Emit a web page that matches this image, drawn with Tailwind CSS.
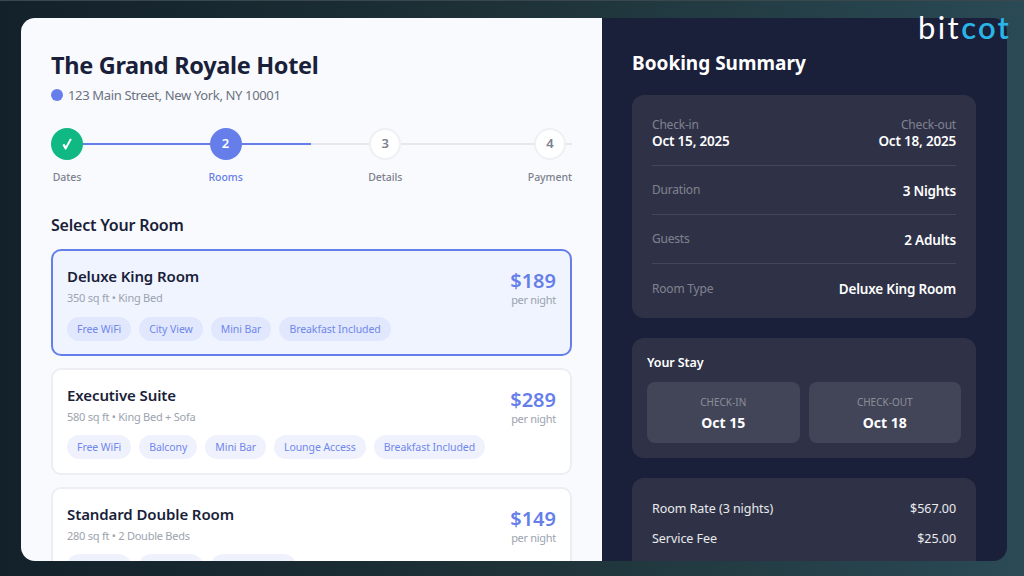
<!DOCTYPE html>
<html lang="en">

<head>
  <meta charset="UTF-8" />
  <meta name="viewport" content="width=device-width, initial-scale=1" />
  <title>Hotel Booking</title>
  <script src="https://cdn.jsdelivr.net/npm/@tailwindcss/browser@4"></script>
</head>

<body class="relative h-[576px] w-[1024px] overflow-hidden border-t border-[#3a474d] bg-gradient-to-r from-[#13212a] via-[#1e3238] to-[#2a4a55] pt-[17px] pl-[21px] font-['Noto_Sans',sans-serif]">

  <!-- Logo sits over the card corner -->
  <div class="absolute top-[7px] left-[918px] font-['Lato',sans-serif] text-[31px] leading-[38px] font-normal tracking-[2.4px] text-white">bit<span class="font-semibold tracking-[2.2px] text-[#29b6e6]">cot</span></div>

  <div class="flex h-[543px] w-[986px] overflow-hidden rounded-[14px]">

    <!-- Left column -->
    <div class="w-[581px] shrink-0 bg-[#f9fafe] px-[30px] pt-[29px]">
      <h1 class="text-[23.5px] leading-[36px] font-bold tracking-[-0.32px] text-[#1a1f3a]">The Grand Royale Hotel</h1>
      <div class="mt-[2px] flex items-center gap-[5px] text-[13px] leading-[20px] tracking-[-0.35px] text-[#6b7280]">
        <span class="h-3 w-3 rounded-full bg-[#667eea]"></span>
        123 Main Street, New York, NY 10001
      </div>

      <!-- Stepper -->
      <div class="relative mt-[23px] flex justify-between">
        <div class="absolute top-[15px] left-0 h-[2px] w-full bg-[#e5e7eb]"></div>
        <div class="absolute top-[15px] left-0 h-[2px] w-[260px] bg-[#667eea]"></div>
        <div class="relative flex flex-col items-center">
          <div class="flex h-8 w-8 items-center justify-center rounded-full bg-[#10b981]">
            <svg width="10" height="12" viewBox="0 0 10 12" fill="#fff"><path d="M0.5 7 L2.2 5.8 L3.8 8 L8 0.5 L9.8 1.2 L4.2 11.5 L3 11.5 Z" /></svg>
          </div>
          <div class="mt-[9px] text-[10.5px] leading-[16px] font-medium tracking-[-0.05px] text-[#7b818d]">Dates</div>
        </div>
        <div class="relative flex flex-col items-center">
          <div class="flex h-8 w-8 items-center justify-center rounded-full bg-[#667eea] text-[13px] font-semibold text-white">2</div>
          <div class="mt-[9px] text-[10.5px] leading-[16px] font-medium tracking-[-0.05px] text-[#667eea]">Rooms</div>
        </div>
        <div class="relative flex flex-col items-center">
          <div class="flex h-8 w-8 items-center justify-center rounded-full border-2 border-[#eef0f3] bg-white text-[13px] font-semibold text-[#7b818d]">3</div>
          <div class="mt-[9px] text-[10.5px] leading-[16px] font-medium tracking-[-0.05px] text-[#7b818d]">Details</div>
        </div>
        <div class="relative flex flex-col items-center">
          <div class="flex h-8 w-8 items-center justify-center rounded-full border-2 border-[#eef0f3] bg-white text-[13px] font-semibold text-[#7b818d]">4</div>
          <div class="mt-[9px] text-[10.5px] leading-[16px] font-medium tracking-[-0.05px] text-[#7b818d]">Payment</div>
        </div>
      </div>

      <h2 class="mt-[28px] text-[16px] leading-[24px] font-semibold tracking-[-0.22px] text-[#1a1f3a]">Select Your Room</h2>

      <!-- Room cards -->
      <div class="mt-[12px] flex flex-col gap-[12px]">
        <div class="h-[107px] rounded-[10px] border-2 border-[#667eea] bg-[#f0f4ff] px-[14px] pt-[13px]">
          <div class="flex justify-between">
            <div>
              <div class="text-[15px] leading-[24px] font-semibold tracking-[-0.1px] text-[#1a1f3a]">Deluxe King Room</div>
              <div class="mt-[2px] text-[11px] leading-[16px] tracking-[-0.25px] text-[#9ca3af]">350 sq ft • King Bed</div>
            </div>
            <div class="pt-[5px] text-right">
              <div class="text-[20px] leading-[24px] font-semibold text-[#667eea]">$189</div>
              <div class="text-[11px] leading-[14px] tracking-[-0.3px] text-[#9ca3af]">per night</div>
            </div>
          </div>
          <div class="mt-[10px] flex gap-2">
            <span class="rounded-full bg-[#667eea]/10 px-[10px] py-[4px] text-[10.5px] leading-[16px] tracking-[-0.07px] text-[#7087ec]">Free WiFi</span>
            <span class="rounded-full bg-[#667eea]/10 px-[10px] py-[4px] text-[10.5px] leading-[16px] tracking-[-0.07px] text-[#7087ec]">City View</span>
            <span class="rounded-full bg-[#667eea]/10 px-[10px] py-[4px] text-[10.5px] leading-[16px] tracking-[-0.07px] text-[#7087ec]">Mini Bar</span>
            <span class="rounded-full bg-[#667eea]/10 px-[10px] py-[4px] text-[10.5px] leading-[16px] tracking-[-0.07px] text-[#7087ec]">Breakfast Included</span>
          </div>
        </div>

        <div class="h-[107px] rounded-[10px] border-2 border-[#eceef3] bg-white px-[14px] pt-[13px]">
          <div class="flex justify-between">
            <div>
              <div class="text-[15px] leading-[24px] font-semibold tracking-[-0.1px] text-[#1a1f3a]">Executive Suite</div>
              <div class="mt-[2px] text-[11px] leading-[16px] tracking-[-0.25px] text-[#9ca3af]">580 sq ft • King Bed + Sofa</div>
            </div>
            <div class="pt-[5px] text-right">
              <div class="text-[20px] leading-[24px] font-semibold text-[#667eea]">$289</div>
              <div class="text-[11px] leading-[14px] tracking-[-0.3px] text-[#9ca3af]">per night</div>
            </div>
          </div>
          <div class="mt-[9px] flex gap-2">
            <span class="rounded-full bg-[#667eea]/10 px-[10px] py-[4px] text-[10.5px] leading-[16px] tracking-[-0.07px] text-[#7087ec]">Free WiFi</span>
            <span class="rounded-full bg-[#667eea]/10 px-[10px] py-[4px] text-[10.5px] leading-[16px] tracking-[-0.07px] text-[#7087ec]">Balcony</span>
            <span class="rounded-full bg-[#667eea]/10 px-[10px] py-[4px] text-[10.5px] leading-[16px] tracking-[-0.07px] text-[#7087ec]">Mini Bar</span>
            <span class="rounded-full bg-[#667eea]/10 px-[10px] py-[4px] text-[10.5px] leading-[16px] tracking-[-0.07px] text-[#7087ec]">Lounge Access</span>
            <span class="rounded-full bg-[#667eea]/10 px-[10px] py-[4px] text-[10.5px] leading-[16px] tracking-[-0.07px] text-[#7087ec]">Breakfast Included</span>
          </div>
        </div>

        <div class="h-[107px] rounded-[10px] border-2 border-[#eceef3] bg-white px-[14px] pt-[13px]">
          <div class="flex justify-between">
            <div>
              <div class="text-[15px] leading-[24px] font-semibold tracking-[-0.1px] text-[#1a1f3a]">Standard Double Room</div>
              <div class="mt-[2px] text-[11px] leading-[16px] tracking-[-0.25px] text-[#9ca3af]">280 sq ft • 2 Double Beds</div>
            </div>
            <div class="pt-[5px] text-right">
              <div class="text-[20px] leading-[24px] font-semibold text-[#667eea]">$149</div>
              <div class="text-[11px] leading-[14px] tracking-[-0.3px] text-[#9ca3af]">per night</div>
            </div>
          </div>
          <div class="mt-[9px] flex gap-2">
            <span class="rounded-full bg-[#667eea]/10 px-[10px] py-[4px] text-[10.5px] leading-[16px] tracking-[-0.07px] text-[#7087ec]">Free WiFi</span>
            <span class="rounded-full bg-[#667eea]/10 px-[10px] py-[4px] text-[10.5px] leading-[16px] tracking-[-0.07px] text-[#7087ec]">City View</span>
            <span class="rounded-full bg-[#667eea]/10 px-[10px] py-[4px] text-[10.5px] leading-[16px] tracking-[-0.07px] text-[#7087ec]">Coffee Maker</span>
          </div>
        </div>
      </div>
    </div>

    <!-- Right column -->
    <div class="flex-1 bg-[#1a1f3a] pt-[30px] pr-[31px] pl-[30px]">
      <h2 class="text-[19px] leading-[30px] font-bold text-white">Booking Summary</h2>

      <div class="mt-[17px] h-[223px] rounded-xl bg-[#2f3247] px-[20px] pt-[21px]">
        <div class="flex justify-between border-b border-white/10 pb-[15px]">
          <div>
            <div class="text-[12px] leading-[17px] tracking-[-0.2px] text-white/40">Check-in</div>
            <div class="text-[13.5px] leading-[17px] font-semibold tracking-[-0.2px] text-white">Oct 15, 2025</div>
          </div>
          <div class="text-right">
            <div class="text-[12px] leading-[17px] tracking-[-0.2px] text-white/40">Check-out</div>
            <div class="text-[13.5px] leading-[17px] font-semibold tracking-[-0.2px] text-white">Oct 18, 2025</div>
          </div>
        </div>
        <div class="flex h-[49px] items-center justify-between border-b border-white/10">
          <span class="text-[12px] tracking-[-0.2px] text-white/40">Duration</span>
          <span class="pt-[2px] text-[13.5px] font-semibold tracking-[-0.2px] text-white">3 Nights</span>
        </div>
        <div class="flex h-[49px] items-center justify-between border-b border-white/10">
          <span class="text-[12px] tracking-[-0.2px] text-white/40">Guests</span>
          <span class="pt-[2px] text-[13.5px] font-semibold tracking-[-0.2px] text-white">2 Adults</span>
        </div>
        <div class="flex h-[49px] items-center justify-between">
          <span class="text-[12px] tracking-[-0.2px] text-white/40">Room Type</span>
          <span class="pt-[2px] text-[13.5px] font-semibold tracking-[-0.2px] text-white">Deluxe King Room</span>
        </div>
      </div>

      <div class="mt-[20px] rounded-xl bg-[#2f3247] p-[15px]">
        <div class="text-[12.5px] leading-[20px] font-semibold tracking-[-0.1px] text-white">Your Stay</div>
        <div class="mt-[9px] flex gap-[9px]">
          <div class="flex h-[61px] flex-1 flex-col items-center justify-center rounded-lg bg-[#424557] pt-[2px]">
            <div class="text-[10px] leading-[16px] text-white/40">CHECK-IN</div>
            <div class="mt-[3px] text-[14px] leading-[20px] font-bold text-white">Oct 15</div>
          </div>
          <div class="flex h-[61px] flex-1 flex-col items-center justify-center rounded-lg bg-[#424557] pt-[2px]">
            <div class="text-[10px] leading-[16px] text-white/40">CHECK-OUT</div>
            <div class="mt-[3px] text-[14px] leading-[20px] font-bold text-white">Oct 18</div>
          </div>
        </div>
      </div>

      <div class="mt-[20px] h-[120px] rounded-xl bg-[#2f3247] px-[20px] pt-[21px] text-[12.5px] tracking-[-0.05px] text-white/90">
        <div class="flex h-[20px] items-center justify-between">
          <span>Room Rate (3 nights)</span>
          <span>$567.00</span>
        </div>
        <div class="mt-[10px] flex h-[20px] items-center justify-between">
          <span>Service Fee</span>
          <span>$25.00</span>
        </div>
      </div>
    </div>
  </div>
</body>

</html>
